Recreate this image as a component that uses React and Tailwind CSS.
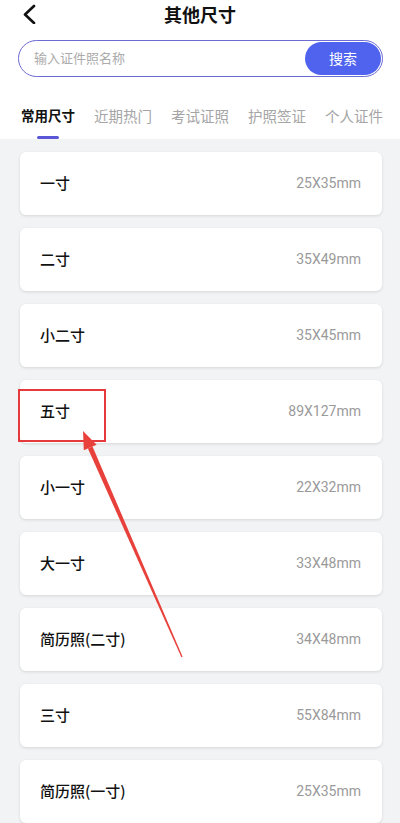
import React from "react";

const sizes = [
  { name: "一寸", size: "25X35mm" },
  { name: "二寸", size: "35X49mm" },
  { name: "小二寸", size: "35X45mm" },
  { name: "五寸", size: "89X127mm", marked: true },
  { name: "小一寸", size: "22X32mm" },
  { name: "大一寸", size: "33X48mm" },
  { name: "简历照(二寸)", size: "34X48mm" },
  { name: "三寸", size: "55X84mm" },
  { name: "简历照(一寸)", size: "25X35mm" },
];

const tabs = ["常用尺寸", "近期热门", "考试证照", "护照签证", "个人证件"];

function SizeCard({ item }) {
  return (
    <div className="relative flex items-center justify-between h-[63px] ml-[20px] mr-[18px] pl-[20px] pr-[21px] bg-white rounded-[6px] shadow-[0_1px_3px_rgba(0,0,0,0.12)]">
      <span className="text-[15px] font-medium text-[#111]">{item.name}</span>
      <span className="text-[14px] text-[#9a9a9a] font-['Roboto','Noto_Sans_CJK_SC',sans-serif]">
        {item.size}
      </span>
      {item.marked && (
        <div className="absolute left-[-2px] top-[9px] w-[88px] h-[53px] border-2 border-[#e5393b]" />
      )}
    </div>
  );
}

export default function App() {
  return (
    <div className="relative w-[400px] h-[823px] overflow-hidden bg-[#f2f3f4] font-['Noto_Sans_CJK_SC',sans-serif]">
      <div className="bg-white h-[139px] flex flex-col">
        <div className="relative h-[30px] flex items-center justify-center">
          <svg className="absolute left-[22px] top-[4px]" width="16" height="20" viewBox="0 0 16 20">
            <path d="M12 2 L3 10.5 L12 19" fill="none" stroke="#111" strokeWidth="2.6" strokeLinecap="round" strokeLinejoin="round" />
          </svg>
          <h1 className="text-[18px] font-bold text-[#111] leading-none -mt-[2px]">其他尺寸</h1>
        </div>
        <div className="mt-[10px] ml-[18px] mr-[17px] h-[37px] flex items-center rounded-full border border-[#6d6bd4] pl-[15px] pr-[1px]">
          <span className="flex-1 text-[13px] text-[#ababab] -mt-[1px]">输入证件照名称</span>
          <button className="h-[33px] w-[76px] rounded-full bg-[#4f63ef] text-white text-[14px]">搜索</button>
        </div>
        <div className="mt-[28px] ml-[21px] flex gap-[19px] whitespace-nowrap">
          {tabs.map((t, i) => (
            <div key={t} className="relative flex flex-col items-center">
              <span className={i === 0 ? "text-[13.5px] leading-[21px] font-bold text-[#111]" : "text-[14.5px] leading-[21px] text-[#a5a5a5]"}>{t}</span>
              {i === 0 && <div className="mt-[10px] w-[22px] h-[3px] rounded-full bg-[#5a57d6]" />}
            </div>
          ))}
        </div>
      </div>
      <div className="pt-[13px] flex flex-col gap-[13px]">
        {sizes.map((s) => (
          <SizeCard key={s.name + s.size} item={s} />
        ))}
      </div>
      <svg className="absolute left-0 top-0 pointer-events-none" width="400" height="823" viewBox="0 0 400 823">
        <polygon points="182.6,656.7 181.4,657.3 87.9,448.5 92.5,446.5" fill="#e8403a" />
        <polygon points="83,431 96.6,444.7 83.8,450.3" fill="#e8403a" />
      </svg>
    </div>
  );
}
